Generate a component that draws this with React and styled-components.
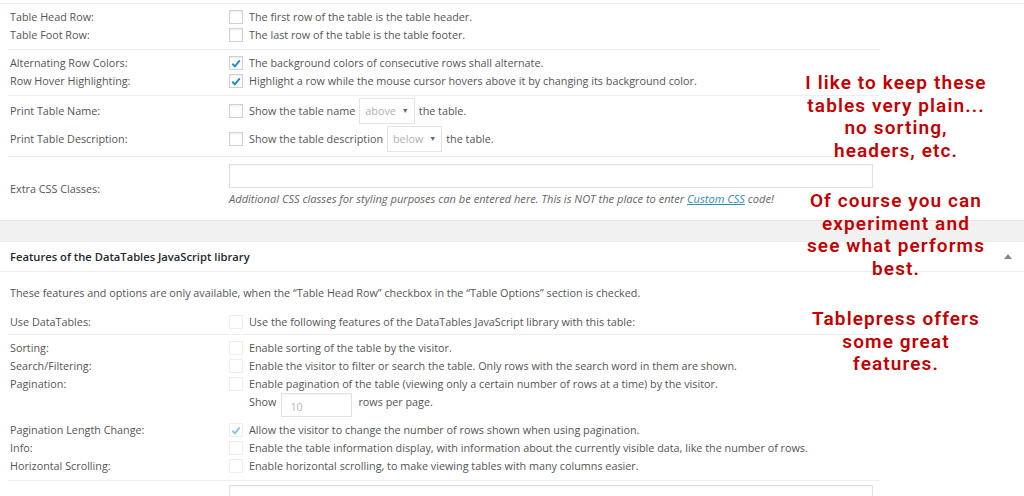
import React from 'react';
import styled, { createGlobalStyle } from 'styled-components';

const GlobalStyle = createGlobalStyle`
  html, body { margin: 0; padding: 0; background: #fff; }
  body {
    font-family: "Open Sans", "Noto Sans", sans-serif;
    font-size: 10.8px;
    color: #555;
  }
`;

const Page = styled.div`
  position: relative;
  width: 1024px;
  height: 496px;
  overflow: hidden;
  background: #fff;
`;

const Postbox = styled.section`
  background: #fff;
  border-top: 1px solid #ececec;
  border-bottom: 1px solid #e6e6e6;
  margin-top: ${p => p.$top || 0}px;
`;

const Gutter = styled.div`
  height: 20px;
  background: #f1f1f1;
`;

const BoxHeader = styled.h2`
  margin: 0;
  height: 29px;
  padding: 0 12px 0 10px;
  display: flex;
  align-items: center;
  justify-content: space-between;
  border-bottom: 1px solid #eee;
  font-size: 11.2px;
  font-weight: 600;
  color: #23282d;
`;

const Note = styled.p`
  margin: 0;
  padding: 12px 10px 8px;
  line-height: 18px;
`;

const OptTable = styled.div`
  width: 872px;
  margin-left: 8px;
`;

const Group = styled.div`
  display: flex;
  flex-direction: column;
  padding: ${p => p.$pad || '4px 0 5px'};
  border-bottom: ${p => (p.$last ? 'none' : '1px solid #eee')};
`;

const Row = styled.div`
  display: grid;
  grid-template-columns: 221px 1fr;
  align-items: ${p => p.$align || 'center'};
  min-height: 18px;
  line-height: 18px;
`;

const Label = styled.div`
  padding-left: 2px;
  padding-top: ${p => p.$pt || 0}px;
  color: #555;
`;

const Field = styled.div`
  display: flex;
  align-items: ${p => p.$align || 'center'};
  flex-direction: ${p => (p.$column ? 'column' : 'row')};
  padding-left: ${p => p.$indent || 0}px;
  white-space: nowrap;
`;

const Box = styled.span`
  width: 14px;
  height: 14px;
  box-sizing: border-box;
  margin-right: 6px;
  flex: none;
  display: inline-flex;
  align-items: center;
  justify-content: center;
  border: 1px solid ${p => (p.$faded ? '#eeeeee' : '#cfd2d4')};
  box-shadow: ${p => (p.$faded ? 'none' : 'inset 0 1px 2px rgba(0,0,0,0.08)')};
  background: #fff;
`;

const Select = styled.span`
  display: inline-flex;
  align-items: center;
  height: 26px;
  box-sizing: border-box;
  margin: 1px 4px;
  padding: 0 5px 0 5px;
  border: 1px solid #e4e4e4;
  color: #b0b0b0;
  gap: 6px;
`;

const Caret = styled.span`
  font-size: 7px;
  color: #666;
`;

const TextInput = styled.div`
  width: ${p => p.$w}px;
  height: ${p => p.$h}px;
  box-sizing: border-box;
  border: 1px solid #e1e1e1;
  box-shadow: inset 0 1px 2px rgba(0,0,0,0.05);
  color: #b5b5b5;
  padding: 4px 0 0 8px;
  line-height: 18px;
  margin: ${p => p.$m || 0};
`;

const Help = styled.div`
  font-style: italic;
  font-size: 11.1px;
  color: #666;
  margin-top: 2px;
  a { color: #2e8cc0; text-decoration: underline; }
`;

const Overlay = styled.div`
  position: absolute;
  left: 776px;
  top: 72px;
  width: 240px;
  text-align: center;
  color: #c60000;
  font-family: Roboto, "Open Sans", sans-serif;
  font-weight: 600;
  font-size: 19px;
  letter-spacing: 1.1px;
  line-height: 22.5px;
  white-space: nowrap;
  p { margin: 0 0 28px; }
`;

const Check = ({ checked, faded }) => (
  <Box $faded={faded}>
    {checked && (
      <svg width="13" height="13" viewBox="0 0 13 13">
        <path d="M2.5 6.8 L5.3 9.6 L10.6 3.2" fill="none" stroke={faded ? '#8cc6e4' : '#1e8cbe'} strokeWidth="2.1" />
      </svg>
    )}
  </Box>
);

const CheckRow = ({ label, text, checked, faded }) => (
  <Row>
    <Label>{label}</Label>
    <Field><Check checked={checked} faded={faded} />{text}</Field>
  </Row>
);

export default function App() {
  return (
    <Page>
      <GlobalStyle />
      <Postbox $top={3}>
        <OptTable>
          <Group>
            <CheckRow label="Table Head Row:" text="The first row of the table is the table header." />
            <CheckRow label="Table Foot Row:" text="The last row of the table is the table footer." />
          </Group>
          <Group>
            <CheckRow label="Alternating Row Colors:" checked text="The background colors of consecutive rows shall alternate." />
            <CheckRow label="Row Hover Highlighting:" checked text="Highlight a row while the mouse cursor hovers above it by changing its background color." />
          </Group>
          <Group $pad="1px 0 3px">
            <Row>
              <Label>Print Table Name:</Label>
              <Field><Check />Show the table name<Select>above<Caret>▼</Caret></Select>the table.</Field>
            </Row>
            <Row>
              <Label>Print Table Description:</Label>
              <Field><Check />Show the table description<Select>below<Caret>▼</Caret></Select>the table.</Field>
            </Row>
          </Group>
          <Group $pad="7px 0 12px" $last>
            <Row>
              <Label $pt={5}>Extra CSS Classes:</Label>
              <Field $column $align="flex-start">
                <TextInput $w={644} $h={24} />
                <Help>Additional CSS classes for styling purposes can be entered here. This is NOT the place to enter <a>Custom CSS</a> code!</Help>
              </Field>
            </Row>
          </Group>
        </OptTable>
      </Postbox>
      <Gutter />
      <Postbox>
        <BoxHeader>
          Features of the DataTables JavaScript library
          <svg width="8" height="5" viewBox="0 0 8 5"><path d="M0 5 L4 0 L8 5 Z" fill="#82878c" /></svg>
        </BoxHeader>
        <Note>These features and options are only available, when the “Table Head Row” checkbox in the “Table Options” section is checked.</Note>
        <OptTable>
          <Group $pad="3px 0 3px">
            <CheckRow faded label="Use DataTables:" text="Use the following features of the DataTables JavaScript library with this table:" />
          </Group>
          <Group $pad="4px 0 5px">
            <CheckRow faded label="Sorting:" text="Enable sorting of the table by the visitor." />
            <CheckRow faded label="Search/Filtering:" text="Enable the visitor to filter or search the table. Only rows with the search word in them are shown." />
            <CheckRow faded label="Pagination:" text="Enable pagination of the table (viewing only a certain number of rows at a time) by the visitor." />
            <Row $align="flex-start">
              <Label />
              <Field $align="flex-start" $indent={20}>Show<TextInput $w={71} $h={24} $m="0 6px 0 5px">10</TextInput>rows per page.</Field>
            </Row>
            <Group $pad="4px 0 0" $last>
              <CheckRow faded checked label="Pagination Length Change:" text="Allow the visitor to change the number of rows shown when using pagination." />
              <CheckRow faded label="Info:" text="Enable the table information display, with information about the currently visible data, like the number of rows." />
              <CheckRow faded label="Horizontal Scrolling:" text="Enable horizontal scrolling, to make viewing tables with many columns easier." />
            </Group>
          </Group>
          <Group $pad="4px 0 0" $last>
            <Row>
              <Label />
              <Field><TextInput $w={644} $h={24} /></Field>
            </Row>
          </Group>
        </OptTable>
      </Postbox>
      <Overlay>
        <p>I like to keep these<br />tables very plain...<br />no sorting,<br />headers, etc.</p>
        <p>Of course you can<br />experiment and<br />see what performs<br />best.</p>
        <p>Tablepress offers<br />some great<br />features.</p>
      </Overlay>
    </Page>
  );
}
